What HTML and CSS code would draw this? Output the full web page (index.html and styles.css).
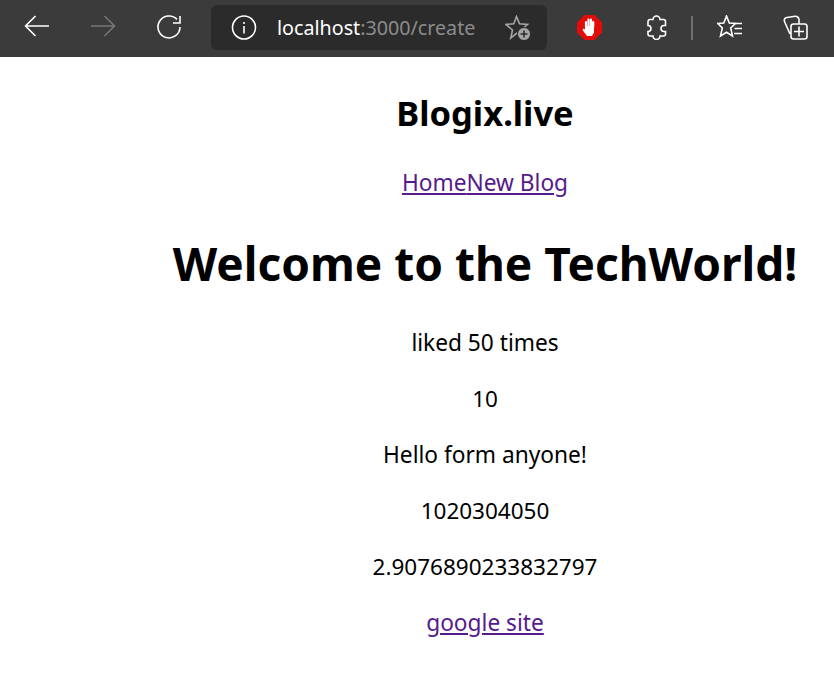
FILE: index.html
```html
<!DOCTYPE html>
<html lang="en">
<head>
<meta charset="utf-8">
<title>Blogix.live</title>
<link rel="stylesheet" href="styles.css">
</head>
<body>
<header class="toolbar">
  <svg class="icon back" viewBox="0 0 26 25"><path d="M25 11H1.500M11.500 1L1.500 11l10 10"/></svg>
  <svg class="icon forward" viewBox="0 0 26 25"><path d="M1 11h23.500M14.500 1l10 10-10 10"/></svg>
  <svg class="icon reload" viewBox="0 0 26 25"><path d="M24 12a11 11 0 1 1-3-7.600M24 1v7h-7"/></svg>
  <div class="address">
    <svg class="icon info" viewBox="0 0 26 25"><circle cx="13" cy="12.500" r="11.500"/><path d="M13 11v7.500M13 7v2"/></svg>
    <span class="url"><span class="host">localhost</span><span class="path">:3000/create</span></span>
    <svg class="icon fav" viewBox="0 0 26 25"><path d="M11.500 1.500L14.500 8.800l8 .7-6 5.200 1.800 7.800-6.800-4.200L5.800 23l1.700-8L1 9.500l7.800-.7z"/><circle class="plus-bg" cx="19" cy="19" r="6.500"/><path class="plus" d="M19 15.500v7M15.500 19h7"/></svg>
  </div>
  <svg class="stop" viewBox="0 0 25 25"><path class="stop-bg" d="M7.500 0h10L25 7.500v10L17.500 25h-10L0 17.500v-10z"/><path class="stop-palm" d="M8 11h9v6.500l-2 3.500h-5l-4.500-6 1-1.500 1.500 1z"/><path class="stop-fingers" d="M9 12V7M11.500 11V4.500M14 11V4.500M16.200 12V7"/></svg>
  <svg class="icon puzzle" viewBox="0 0 23 25"><path d="M8 4.500a3.500 3.500 0 0 1 7 0h3.500a2 2 0 0 1 2 2v4H19a3 3 0 0 0 0 6h1.500V19a2 2 0 0 1-2 2H15a3.500 3.500 0 0 1-7 0H5a2 2 0 0 1-2-2v-2.500a3 3 0 0 0 0-6v-4a2 2 0 0 1 2-2z"/></svg>
  <span class="divider"></span>
  <svg class="icon favs" viewBox="0 0 26 25"><path d="M9.500 1L12.300 8l6.200.5-4.800 4.500 1.800 8-6-3.800L3.500 21l1.800-8L.800 8.500 6.800 8zM17.500 8.500h7.500M17.500 13.500h7.500M17 18.500h8"/></svg>
  <svg class="icon collections" viewBox="0 0 26 25"><path d="M8 19L2.500 6.500Q1.500 3 5 2.500L13 1.200Q16.500 1 17 4.500V9M11.500 9h11a2.500 2.500 0 0 1 2.500 2.500v10a2.500 2.500 0 0 1-2.500 2.500h-11A2.500 2.500 0 0 1 9 21.500v-10A2.500 2.500 0 0 1 11.500 9zM17 11.500v10M12 16.500h10"/></svg>
</header>
<main class="page">
  <div class="content">
    <h2 class="brand">Blogix.live</h2>
    <p class="row nav"><a href="#">Home</a><a href="#">New Blog</a></p>
    <h1 class="title">Welcome to the TechWorld!</h1>
    <p class="row">liked 50 times</p>
    <p class="row num">10</p>
    <p class="row">Hello form anyone!</p>
    <p class="row num">1020304050</p>
    <p class="row num">2.9076890233832797</p>
    <p class="row"><a href="#">google site</a></p>
  </div>
</main>
</body>
</html>
```
FILE: styles.css
```css
* { box-sizing: border-box; }
html, body { margin: 0; padding: 0; }
body { width: 834px; height: 691px; overflow: hidden; background: #fff; color: #000; font-family: "Noto Sans", "Open Sans", sans-serif; }
.toolbar { height: 57px; background: #3b3b3b; display: flex; align-items: center; padding: 0 0 2px 24px; }
.icon { fill: none; stroke: #fff; stroke-width: 1.6; flex: none; width: 26px; height: 25px; }
.forward { margin-left: 40px; stroke: #777; }
.reload { margin-left: 40px; }
.address { width: 336px; height: 45px; margin-left: 29px; background: #2b2b2b; border-radius: 6px; display: flex; align-items: center; padding-left: 20px; flex: none; }
.url { font-size: 19.7px; margin-left: 20px; width: 228px; white-space: nowrap; }
.host { color: #fff; }
.path { color: #8c8c8c; }
.fav { stroke: #a5a5a5; }
.plus-bg { fill: #a5a5a5; stroke: #2b2b2b; stroke-width: 1; }
.plus { stroke: #2b2b2b; }
.stop { width: 25px; height: 25px; margin-left: 30px; flex: none; }
.stop-bg { fill: #e40b0b; }
.stop-palm { fill: #fff; }
.stop-fingers { fill: none; stroke: #fff; stroke-width: 2.2; stroke-linecap: round; }
.icon.puzzle { width: 23px; margin-left: 43px; }
.divider { width: 2px; height: 24px; background: #707070; margin-left: 23px; flex: none; }
.favs { margin-left: 24px; }
.collections { margin-left: 39px; }
.page { padding-left: 136px; }
.content { width: 698px; text-align: center; }
.brand { font-size: 34.5px; font-weight: 700; margin: 0; padding-top: 34px; line-height: 44px; }
.row { font-size: 22.7px; line-height: 30px; margin: 26px 0; }
.num { font-size: 22.5px; }
.nav { margin-top: 33px; }
.title { font-size: 46px; font-weight: 700; margin: 35px 0; line-height: 60px; }
a { color: #551a8b; text-decoration: underline; }
```
